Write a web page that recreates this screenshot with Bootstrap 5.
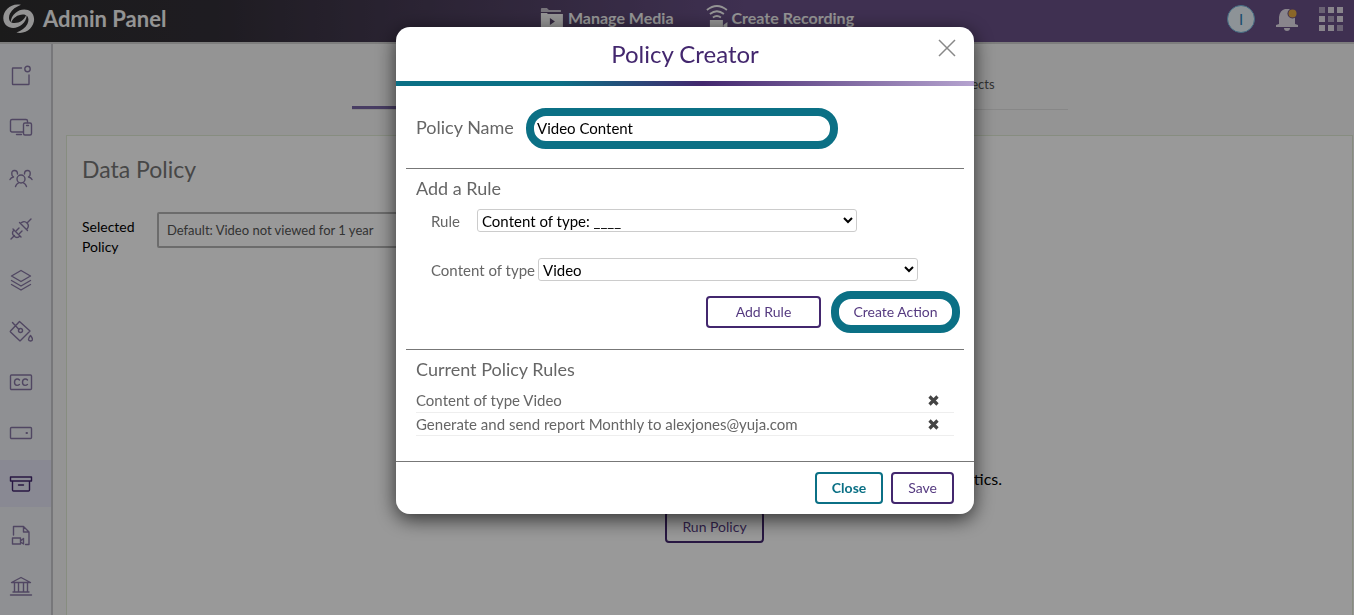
<!DOCTYPE html>
<html lang="en">
<head>
<meta charset="utf-8">
<meta name="viewport" content="width=device-width, initial-scale=1">
<title>Admin Panel - Data Policy</title>
<link href="https://cdn.jsdelivr.net/npm/bootstrap@5.3.0/dist/css/bootstrap.min.css" rel="stylesheet">
<style>
:root { --plum: #43276e; --teal: #0b7085; }
body { font-family: Lato, "Liberation Sans", sans-serif; font-size: 15px; line-height: 20px; background: #f7f7f7; color: #000; overflow: hidden; }
svg { display: block; }
.bare { border: 0; background: none; padding: 0; }

/* top bar */
.topbar { height: 44px; border-bottom: 2px solid #d0d0d0; background: linear-gradient(90deg, #2e2e2e 0, #332f38 16%, #695087 55%); color: #f7f7f7; }
.brand-area { padding: 4px 0 0 3px; gap: 8px; }
.brand-title { font-size: 22px; font-weight: 700; line-height: 28px; }
.topnav { padding: 5px 0 0 40px; gap: 32px; }
.toplink { font-size: 16px; font-weight: 700; line-height: 24px; color: #f7f7f7; text-decoration: none; }
.tools { padding: 5px 11px 0 0; gap: 21px; }
.avatar { width: 28px; height: 28px; padding: 0; border: 1px solid #72b4dc; border-radius: 50%; background: #ecf6fc; color: #2b80b5; }

/* side bar */
.sidebar { width: 53px; flex: none; background: #eef0f5; border-right: 2px solid #c6c7cb; padding-top: 8px; gap: 4px; min-height: calc(100vh - 44px); }
.side-item { height: 47px; padding-left: 9px; color: #8676a3; }
.side-item svg { fill: none; stroke: currentColor; stroke-width: 1.4; stroke-linecap: round; stroke-linejoin: round; }
.side-item.active { background: #e4e4f6; color: #43276e; }

/* page */
.page { padding: 0 1px 0 13px; }
.tabs { width: 716px; max-width: 100%; height: 66px; margin: 0 auto 25px; padding-top: 30px; border-bottom: 1px solid #e2e2e2; }
.tabs a { flex: 1 1 0; height: 35px; text-align: center; color: #555; font-size: 13px; text-decoration: none; }
.tabs a.active { border-bottom: 3px solid #7866a5; }
.policy-panel { background: #fff; border: 1px solid #e2ecd6; border-bottom: 0; padding: 19px 15px 0; min-height: calc(100vh - 135px); }
.policy-panel h1 { font-size: 23px; line-height: 28px; font-weight: 400; color: #777; margin-bottom: 29px; }
.selected-label { width: 75px; padding-top: 5px; font-size: 14px; }
.policy-select { width: 380px; height: 36px; border: 2px solid #b5b5b5; border-radius: 2px; background: #fff; color: #555; font-size: 13px; padding: 0 4px; }
.run-note { margin: 212px 0 22px; padding-left: 10px; font-size: 16px; text-align: center; }
.run-area { padding-left: 10px; }

/* buttons */
.btn-line { border: 2px solid var(--plum); border-radius: 4px; background: #fff; color: #553a80; font-size: 14px; line-height: 20px; height: 32px; padding: 4px 15px; }
.btn-close-line { border-color: var(--teal); color: var(--teal); font-weight: 700; }
.btn-add { width: 115px; }
.ringed { border: 8px solid var(--teal); border-radius: 20px; background: #fff; }
.btn-ring { width: 129px; height: 42px; padding: 0; color: #553a80; font-size: 14px; line-height: 20px; }

/* dialog */
.modal-backdrop.show { opacity: .4; }
.modal { padding-left: 16px; }
.policy-dialog { max-width: 578px; margin: 27px auto; }
.policy-dialog .modal-content { border: 0; border-radius: 14px; overflow: hidden; color: #666; }
.dialog-shadow { border-radius: 14px; box-shadow: 0 5px 20px rgba(0, 0, 0, .7); }
.policy-dialog .modal-header { height: 54px; padding: 0 18px; border: 0; justify-content: center; }
.modal-title { font-size: 24px; line-height: 32px; color: var(--plum); font-weight: 400; }
.dismiss { position: absolute; right: 18px; top: 12px; }
.rainbow { height: 5px; background: linear-gradient(90deg, #0b7085 28%, #43276e 53%, #b5a3cf 100%); }
.policy-dialog .modal-body { padding: 22px 10px 25px; }
.policy-dialog h2, .name-label { font-size: 18px; line-height: 24px; font-weight: 400; color: #666; margin: 0; }
.block { padding: 0 10px; }
.name-label { width: 110px; padding-bottom: 4px; }
.name-input { width: 312px; height: 41px; padding: 0 3px 2px; font-size: 15px; color: #000; outline: 0; }
.line { border: 0; border-top: 1px solid #777; opacity: 1; margin: 16px 0 7px; }
.name-block { padding-bottom: 3px; }
.rule-row { padding-left: 15px; margin-top: 9px; }
.type-row { margin-top: 26px; }
.rule-select { width: 380px; height: 23px; border: 1px solid #ccc; border-radius: 3px; background: #fff; color: #000; font-size: 15px; padding: 0; }
.rule-label { width: 46px; }
.type-label { width: 107px; }
.rule-actions { gap: 10px; padding: 10px 4px 0 0; }
.rules { width: 100%; }
.rules td { height: 23px; padding: 0; border-bottom: 1px solid #eee; vertical-align: middle; }
.rules td:last-child { width: 26px; }
.policy-dialog .modal-footer { height: 53px; padding: 0 20px; border-top: 1px solid #777; gap: 8px; }
.policy-dialog .modal-footer > * { margin: 0; }
</style>
</head>
<body>
<header class="topbar d-flex align-items-start justify-content-between position-relative">
  <div class="brand-area d-flex align-items-center">
    <svg width="32" height="30" viewBox="0 0 32 30"><g id="swirl" fill="#f7f7f7"><path d="M18 .8C8-1.500 0 6.500 .3 14.500C.8 24.500 12 26.500 19 20.500C22.500 17.500 24 13.500 23.500 10.500C21.500 15.500 17 19 11.500 19C6 19 4.800 14 7 9.500C9 5.500 13 2.800 18 .8Z"/></g><use href="#swirl" transform="rotate(180 15.700 14.700)"/></svg>
    <span class="brand-title">Admin Panel</span>
  </div>
  <nav class="topnav position-absolute start-50 translate-middle-x d-flex text-nowrap" aria-label="Main">
    <a class="toplink d-flex align-items-center gap-1" href="#">
      <svg width="24" height="24" viewBox="0 0 24 24" fill="#f7f7f7"><path d="M1 3q0-1 1-1h5l2 2h12v2H1z" opacity=".7"/><path d="M1 7h6l1 1h15v15H1zM10 12v7l5-3.500z" fill-rule="evenodd"/></svg>
      Manage Media</a>
    <a class="toplink d-flex align-items-center gap-1" href="#">
      <svg width="22" height="26" viewBox="0 0 22 26" fill="none" stroke="#f7f7f7" stroke-width="1.800"><path d="M1 5Q11-3 21 5M4 9q7-5.500 14 0M7 12.500q4-3 8 0"/><path d="M4 15h13v10H4zM17.500 20l4-3v8l-4-3z" fill="#f7f7f7" stroke="none"/></svg>
      Create Recording</a>
  </nav>
  <div class="tools d-flex align-items-center">
    <button class="avatar d-flex align-items-center justify-content-center" type="button">I</button>
    <button class="bare" type="button" aria-label="Notifications"><svg width="22" height="24" viewBox="0 0 22 24" fill="#e4deea"><path d="M9 2h4q5 1 6 8v7l3 1v2H0v-2l3-1v-7Q4 3 9 2zM8 21h6q0 3-3 3t-3-3z"/><circle cx="16.500" cy="6.500" r="5" fill="#695087"/><circle cx="16.500" cy="6.500" r="4" fill="#e8ac45"/></svg></button>
    <button class="bare" type="button" aria-label="Apps"><svg width="24" height="24" viewBox="0 0 24 24" fill="#e4deea"><path d="M9 0h6v6H9zM18 0h6v6h-6zM0 9h6v6H0zM18 9h6v6h-6zM0 18h6v6H0zM9 18h6v6H9z"/><path d="M0 0h6v6H0zM9 9h6v6H9zM18 18h6v6h-6z" opacity=".6"/></svg></button>
  </div>
</header>

<div class="d-flex">
  <nav class="sidebar d-flex flex-column" aria-label="Sections">
    <a class="side-item d-flex align-items-center" href="#" aria-label="Overview"><svg width="24" height="24" viewBox="0 0 24 24"><path d="M12.500 4H4q-.5 0-.5.500v15.500q0 .5.500.5h15.500q.5 0 .5-.5v-9"/><circle cx="18.500" cy="5" r="2.700"/></svg></a>
    <a class="side-item d-flex align-items-center" href="#" aria-label="Devices"><svg width="24" height="24" viewBox="0 0 24 24"><path d="M14 17H3q-1.500 0-1.500-1.500V6Q1.500 4.500 3 4.500h14Q18.500 4.500 18.500 6v1.500M7.500 19.500h5"/><rect x="14.500" y="8" width="8" height="12" rx="1.500"/><path d="M17.500 10.500h2"/></svg></a>
    <a class="side-item d-flex align-items-center" href="#" aria-label="Users"><svg width="24" height="24" viewBox="0 0 24 24"><circle cx="12" cy="13" r="4"/><path d="M6.500 20.500q.7-2.500 3-3.600M17.500 20.500q-.7-2.500-3-3.600M8.500 8q0-3.500-3-3.500T2.800 8q0 2.500 1.700 3Q2 11.500 1 13.500M15.500 8q0-3.500 3-3.500T21.200 8q0 2.500-1.700 3 2.500.5 3.500 2.500"/></svg></a>
    <a class="side-item d-flex align-items-center" href="#" aria-label="Integrations"><svg width="24" height="24" viewBox="0 0 24 24"><path d="M2 22l3.500-3.500M18.500 5.500L22 2M4 12l8 8M5 13q-3 3 0 6t6 0M10.500 5.500l8 8M11.500 6.500q3.500-3.500 6.500-.5t-.5 6.500M7.500 13.500L10 11M10.500 16.500L13 14"/></svg></a>
    <a class="side-item d-flex align-items-center" href="#" aria-label="Layers"><svg width="24" height="24" viewBox="0 0 24 24"><path d="M12 2.500L21.500 8 12 13.500 2.500 8zM2.500 12.500l9.500 5.500 9.500-5.500M2.500 16.500l9.500 5.500 9.500-5.500"/></svg></a>
    <a class="side-item d-flex align-items-center" href="#" aria-label="Branding"><svg width="24" height="24" viewBox="0 0 24 24"><path d="M10.500 2.500l10.500 9.500-9.500 9.500q-.5.500-1 0L1.500 13q-.5-.5 0-1zM3.500 3.500l6.500 7"/><circle cx="11.500" cy="11.500" r="2"/><path d="M21.500 16.500q-4 5 0 5.500 4-.5 0-5.500z"/></svg></a>
    <a class="side-item d-flex align-items-center" href="#" aria-label="Captions"><svg width="24" height="24" viewBox="0 0 24 24"><rect x="1.500" y="5" width="21" height="14.500" rx="1"/><path d="M10.500 10q-1-1.200-2.700-1-2.300.4-2.300 3.200 0 3 2.500 3.200 1.600 0 2.500-1M18.500 10q-1-1.200-2.700-1-2.300.4-2.300 3.200 0 3 2.500 3.200 1.600 0 2.500-1"/></svg></a>
    <a class="side-item d-flex align-items-center" href="#" aria-label="Storage"><svg width="24" height="24" viewBox="0 0 24 24"><rect x="1.500" y="6.500" width="21" height="11" rx="1"/><path d="M17.500 12h.5" stroke-width="2"/></svg></a>
    <a class="side-item active d-flex align-items-center" href="#" aria-label="Data Policy"><svg width="24" height="24" viewBox="0 0 24 24"><path d="M1.500 5h21v4h-21zM3.500 9v9q0 1 1 1h15q1 0 1-1V9M9.500 13h5"/></svg></a>
    <a class="side-item d-flex align-items-center" href="#" aria-label="Media files"><svg width="24" height="24" viewBox="0 0 24 24"><path d="M4.500 12V3.500h10L20 9v12.500h-3.500M14.500 3.500V9H20M3.500 15h8v6h-8zM11.500 18l3-2.500v5.500l-3-2"/></svg></a>
    <a class="side-item d-flex align-items-center" href="#" aria-label="Institution"><svg width="24" height="24" viewBox="0 0 24 24"><path d="M2.500 8.500L12 3.500l9.500 5zM4 18h16M1.500 21h21M5.500 9v9M9.500 9v9M14.500 9v9M18.500 9v9"/></svg></a>
  </nav>

  <main class="page flex-grow-1">
    <div class="tabs d-flex">
      <a class="active" href="#">Data Policy</a>
      <a href="#">Storage</a>
      <a href="#">Deleted Objects</a>
    </div>
    <section class="policy-panel">
      <h1>Data Policy</h1>
      <div class="d-flex">
        <label class="selected-label" for="selected-policy">Selected Policy</label>
        <select class="policy-select" id="selected-policy"><option>Default: Video not viewed for 1 year</option></select>
      </div>
      <p class="run-note">Run the selected policy to apply its rules to all the media and refresh any statistics.</p>
      <div class="run-area text-center"><button class="btn btn-line" type="button">Run Policy</button></div>
    </section>
  </main>
</div>

<div class="modal-backdrop show"></div>
<div class="modal d-block" tabindex="-1" role="dialog" aria-modal="true" aria-labelledby="dialog-title">
  <div class="modal-dialog policy-dialog">
    <div class="dialog-shadow">
    <form class="modal-content">
      <div class="modal-header">
        <div class="modal-title" id="dialog-title">Policy Creator</div>
        <button class="dismiss bare" type="button" aria-label="Dismiss"><svg width="18" height="18" viewBox="0 0 18 18" stroke="#888" stroke-width="1.500"><path d="M1 1l16 16M17 1L1 17"/></svg></button>
      </div>
      <div class="rainbow"></div>
      <div class="modal-body">
        <div class="block name-block d-flex align-items-center">
          <label class="name-label" for="policy-name">Policy Name</label>
          <input class="name-input ringed" id="policy-name" type="text" value="Video Content">
        </div>
        <hr class="line">
        <div class="block">
          <h2>Add a Rule</h2>
          <div class="rule-row d-flex align-items-center">
            <label class="rule-label" for="rule">Rule</label>
            <select class="rule-select" id="rule"><option>Content of type: ____</option></select>
          </div>
          <div class="rule-row type-row d-flex align-items-center">
            <label class="type-label" for="type">Content of type</label>
            <select class="rule-select" id="type"><option>Video</option></select>
          </div>
        </div>
        <div class="rule-actions d-flex justify-content-end align-items-center">
          <button class="btn btn-line btn-add" type="button">Add Rule</button>
          <button class="btn-ring ringed" type="button">Create Action</button>
        </div>
        <hr class="line">
        <div class="block">
          <h2>Current Policy Rules</h2>
          <table class="rules mt-2">
            <tr><td>Content of type Video</td><td><button class="bare" type="button" aria-label="Remove rule"><svg width="11" height="11" viewBox="0 0 11 11" stroke="#444" stroke-width="3.200"><path d="M1.500 1.500l8 8M9.500 1.500l-8 8"/></svg></button></td></tr>
            <tr><td>Generate and send report Monthly to alexjones@yuja.com</td><td><button class="bare" type="button" aria-label="Remove rule"><svg width="11" height="11" viewBox="0 0 11 11" stroke="#444" stroke-width="3.200"><path d="M1.500 1.500l8 8M9.500 1.500l-8 8"/></svg></button></td></tr>
          </table>
        </div>
      </div>
      <div class="modal-footer">
        <button class="btn btn-line btn-close-line" type="button">Close</button>
        <button class="btn btn-line" type="submit">Save</button>
      </div>
    </form>
    </div>
  </div>
</div>
<script src="https://cdn.jsdelivr.net/npm/bootstrap@5.3.0/dist/js/bootstrap.bundle.min.js"></script>
</body>
</html>
